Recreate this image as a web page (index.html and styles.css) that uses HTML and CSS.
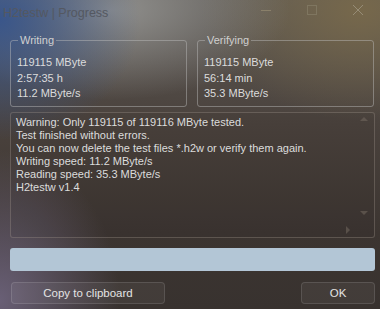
FILE: index.html
```html
<!DOCTYPE html>
<html>
<head>
<meta charset="utf-8">
<link rel="stylesheet" href="styles.css">
</head>
<body>
<div class="win">
  <div class="titlebar">
    <span class="title">H2testw | Progress</span>
    <div class="controls">
      <svg class="ctl" width="12" height="12" viewBox="0 0 12 12"><path d="M1 6.5H11" stroke="#8a806a" stroke-width="1"/></svg>
      <svg class="ctl" width="12" height="12" viewBox="0 0 12 12"><rect x="1.5" y="1.5" width="9" height="9" fill="none" stroke="#7f7660" stroke-width="1"/></svg>
      <svg class="ctl" width="12" height="12" viewBox="0 0 12 12"><path d="M1 1L11 11M11 1L1 11" stroke="#968c76" stroke-width="1"/></svg>
    </div>
  </div>
  <div class="groups">
    <fieldset class="group">
      <legend>Writing</legend>
      <div class="val">119115 MByte</div>
      <div class="val">2:57:35 h</div>
      <div class="val">11.2 MByte/s</div>
    </fieldset>
    <fieldset class="group">
      <legend>Verifying</legend>
      <div class="val">119115 MByte</div>
      <div class="val">56:14 min</div>
      <div class="val">35.3 MByte/s</div>
    </fieldset>
  </div>
  <div class="log">
    <div class="logtext">Warning: Only 119115 of 119116 MByte tested.<br>Test finished without errors.<br>You can now delete the test files *.h2w or verify them again.<br>Writing speed: 11.2 MByte/s<br>Reading speed: 35.3 MByte/s<br>H2testw v1.4</div>
    <span class="arr up"></span>
    <span class="arr down"></span>
    <span class="arr right"></span>
  </div>
  <div class="progress"></div>
  <div class="buttons">
    <button class="btn copy">Copy to clipboard</button>
    <button class="btn ok">OK</button>
  </div>
</div>
</body>
</html>
```

FILE: styles.css
```css
html, body {
  margin: 0;
  padding: 0;
  width: 380px;
  height: 309px;
  overflow: hidden;
}
body {
  font-family: "Liberation Sans", "DejaVu Sans", sans-serif;
  font-size: 11px;
  color: #dcdcdc;
  background:
    radial-gradient(ellipse 140px 120px at 0px 20px, rgba(55,85,140,0.95), rgba(55,85,140,0) 100%),
    radial-gradient(ellipse 180px 90px at 110px 10px, rgba(150,150,148,0.9), rgba(150,150,148,0) 100%),
    radial-gradient(ellipse 120px 150px at 0px 300px, rgba(110,100,125,0.9), rgba(110,100,125,0) 100%),
    radial-gradient(ellipse 160px 110px at 360px 10px, rgba(120,105,75,0.95), rgba(120,105,75,0) 100%),
    linear-gradient(180deg, #5e5a55 0%, #4a423d 40%, #3c3531 75%, #38322f 100%);
}
.win {
  display: flex;
  flex-direction: column;
  height: 309px;
}
.titlebar {
  height: 30px;
  display: flex;
  align-items: center;
  justify-content: space-between;
}
.title {
  padding-left: 3px;
  margin-top: -4px;
  font-family: "Liberation Sans", sans-serif;
  font-size: 12.5px;
  color: #545861;
}
.controls {
  display: flex;
  gap: 34px;
  padding-right: 16px;
  margin-top: -10px;
}
.groups {
  display: flex;
  gap: 10px;
  padding: 0 6px 0 10px;
  margin-top: 4px;
}
.group {
  flex: 1;
  margin: 0;
  border: 1px solid rgba(190,190,190,0.45);
  border-radius: 3px;
  padding: 9px 6px 4px 6px;
  min-width: 0;
  box-sizing: border-box;
  height: 73px;
}
.group legend {
  padding: 0 2px;
  margin-left: 1px;
  color: #d0d0d0;
}
.val {
  line-height: 15.5px;
}
.log {
  position: relative;
  margin: 5px 5px 0 10px;
  height: 124px;
  border: 1px solid rgba(160,150,140,0.35);
  border-radius: 3px;
  background: rgba(0,0,0,0.04);
}
.logtext {
  padding: 3px 0 0 5px;
  line-height: 13px;
  white-space: nowrap;
}
.arr {
  position: absolute;
  width: 0;
  height: 0;
  border: 4px solid transparent;
}
.arr.up { right: 6px; top: 4px; border-bottom-color: rgba(120,110,100,0.5); border-top-width: 0; }
.arr.down { right: 6px; top: 98px; border-top-color: rgba(120,110,100,0.5); border-bottom-width: 0; }
.arr.right { right: 24px; top: 113px; border-left-color: rgba(120,110,100,0.5); border-right-width: 0; }
.progress {
  margin: 10px 5px 0 10px;
  height: 23px;
  background: #b3c6d6;
  border-radius: 3px;
}
.buttons {
  display: flex;
  justify-content: space-between;
  padding: 0 5px 0 11px;
  margin-top: 11px;
}
.btn {
  font-family: "Liberation Sans", "DejaVu Sans", sans-serif;
  font-size: 11.5px;
  color: #e4e4e4;
  background: rgba(255,255,255,0.05);
  border: 1px solid rgba(255,255,255,0.12);
  border-radius: 4px;
  height: 22px;
  padding: 0;
}
.copy { width: 154px; }
.ok { width: 74px; }
```
